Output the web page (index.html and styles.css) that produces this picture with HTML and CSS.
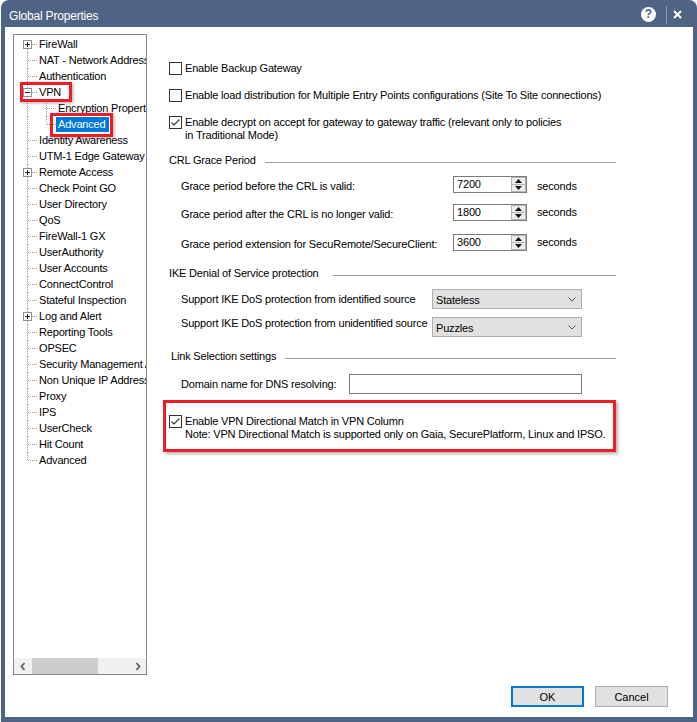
FILE: index.html
```html
<!DOCTYPE html>
<html>
<head>
<meta charset="utf-8">
<title>Global Properties</title>
<link rel="stylesheet" href="styles.css">
</head>
<body>
<div class="window">
  <div class="titlebar">
    <span class="title">Global Properties</span>
    <span class="help">?</span>
    <span class="sep"></span>
    <svg class="close" width="9" height="9" viewBox="0 0 9 9"><path d="M1 1 L8 8 M8 1 L1 8" stroke="#fff" stroke-width="2" fill="none"/></svg>
  </div>
  <div class="client">
    <div class="main">
      <div class="tree">
        <ul class="nodes">
          <li class="node first"><svg class="exp" width="9" height="9" viewBox="0 0 9 9"><rect x="0.5" y="0.5" width="8" height="8" fill="#fff" stroke="#919191"/><path d="M2 4.5 H7 M4.5 2 V7" stroke="#222"/></svg>FireWall</li>
          <li class="node">NAT - Network Address Translation</li>
          <li class="node">Authentication</li>
          <li class="node"><svg class="exp" width="9" height="9" viewBox="0 0 9 9"><rect x="0.5" y="0.5" width="8" height="8" fill="#fff" stroke="#919191"/><path d="M2 4.5 H7" stroke="#222"/></svg>VPN</li>
          <li class="node child"><span class="branch"></span>Encryption Properties</li>
          <li class="node child"><span class="branch lastchild"></span><span class="sel">Advanced</span></li>
          <li class="node">Identity Awareness</li>
          <li class="node">UTM-1 Edge Gateway</li>
          <li class="node"><svg class="exp" width="9" height="9" viewBox="0 0 9 9"><rect x="0.5" y="0.5" width="8" height="8" fill="#fff" stroke="#919191"/><path d="M2 4.5 H7 M4.5 2 V7" stroke="#222"/></svg>Remote Access</li>
          <li class="node">Check Point GO</li>
          <li class="node">User Directory</li>
          <li class="node">QoS</li>
          <li class="node">FireWall-1 GX</li>
          <li class="node">UserAuthority</li>
          <li class="node">User Accounts</li>
          <li class="node">ConnectControl</li>
          <li class="node">Stateful Inspection</li>
          <li class="node"><svg class="exp" width="9" height="9" viewBox="0 0 9 9"><rect x="0.5" y="0.5" width="8" height="8" fill="#fff" stroke="#919191"/><path d="M2 4.5 H7 M4.5 2 V7" stroke="#222"/></svg>Log and Alert</li>
          <li class="node">Reporting Tools</li>
          <li class="node">OPSEC</li>
          <li class="node">Security Management Access</li>
          <li class="node">Non Unique IP Address Ranges</li>
          <li class="node">Proxy</li>
          <li class="node">IPS</li>
          <li class="node">UserCheck</li>
          <li class="node">Hit Count</li>
          <li class="node last">Advanced</li>
        </ul>
        <div class="hscroll">
          <span class="sarrow"><svg width="6" height="9" viewBox="0 0 6 9"><path d="M4.5 1 L1.5 4.5 L4.5 8" stroke="#606060" stroke-width="1.8" fill="none"/></svg></span>
          <span class="thumb"></span>
          <span class="strack"></span>
          <span class="sarrow"><svg width="6" height="9" viewBox="0 0 6 9"><path d="M1.5 1 L4.5 4.5 L1.5 8" stroke="#606060" stroke-width="1.8" fill="none"/></svg></span>
        </div>
        <span class="mark mark-vpn"></span>
        <span class="mark mark-adv"></span>
      </div>

      <div class="pane">
        <div class="cb-row">
          <span class="cb"></span>
          <span class="cb-lbl">Enable Backup Gateway</span>
        </div>
        <div class="cb-row gap">
          <span class="cb"></span>
          <span class="cb-lbl">Enable load distribution for Multiple Entry Points configurations (Site To Site connections)</span>
        </div>
        <div class="cb-row gap">
          <span class="cb"><svg width="11" height="11" viewBox="0 0 11 11"><path d="M1.5 5.5 L4 8 L9.5 2.5" stroke="#333" stroke-width="1.1" fill="none"/></svg></span>
          <span class="cb-lbl">Enable decrypt on accept for gateway to gateway traffic (relevant only to policies<br>in Traditional Mode)</span>
        </div>

        <div class="sect sect-crl"><span class="sect-t w-crl">CRL Grace Period</span><span class="rule"></span></div>
        <div class="frow crl1">
          <span class="flabel w-crl-l">Grace period before the CRL is valid:</span>
          <span class="spin"><span class="spin-val">7200</span><span class="spin-btns"><span class="sb"><svg width="7" height="4" viewBox="0 0 7 4"><path d="M0 4 L3.5 0 L7 4 Z" fill="#111"/></svg></span><span class="sb"><svg width="7" height="4" viewBox="0 0 7 4"><path d="M0 0 L3.5 4 L7 0 Z" fill="#111"/></svg></span></span></span>
          <span class="unit">seconds</span>
        </div>
        <div class="frow crl2">
          <span class="flabel w-crl-l">Grace period after the CRL is no longer valid:</span>
          <span class="spin"><span class="spin-val">1800</span><span class="spin-btns"><span class="sb"><svg width="7" height="4" viewBox="0 0 7 4"><path d="M0 4 L3.5 0 L7 4 Z" fill="#111"/></svg></span><span class="sb"><svg width="7" height="4" viewBox="0 0 7 4"><path d="M0 0 L3.5 4 L7 0 Z" fill="#111"/></svg></span></span></span>
          <span class="unit up">seconds</span>
        </div>
        <div class="frow crl3">
          <span class="flabel w-crl-l">Grace period extension for SecuRemote/SecureClient:</span>
          <span class="spin"><span class="spin-val">3600</span><span class="spin-btns"><span class="sb"><svg width="7" height="4" viewBox="0 0 7 4"><path d="M0 4 L3.5 0 L7 4 Z" fill="#111"/></svg></span><span class="sb"><svg width="7" height="4" viewBox="0 0 7 4"><path d="M0 0 L3.5 4 L7 0 Z" fill="#111"/></svg></span></span></span>
          <span class="unit up">seconds</span>
        </div>

        <div class="sect sect-ike"><span class="sect-t w-ike">IKE Denial of Service protection</span><span class="rule"></span></div>
        <div class="frow ike1">
          <span class="flabel w-ike-l">Support IKE DoS protection from identified source</span>
          <span class="combo"><span>Stateless</span><svg width="8" height="5" viewBox="0 0 8 5"><path d="M0.5 0.5 L4 4 L7.5 0.5" stroke="#555" fill="none"/></svg></span>
        </div>
        <div class="frow ike2 toplabel">
          <span class="flabel w-ike-l">Support IKE DoS protection from unidentified source</span>
          <span class="combo"><span>Puzzles</span><svg width="8" height="5" viewBox="0 0 8 5"><path d="M0.5 0.5 L4 4 L7.5 0.5" stroke="#555" fill="none"/></svg></span>
        </div>

        <div class="sect sect-link"><span class="sect-t w-link">Link Selection settings</span><span class="rule"></span></div>
        <div class="frow dns">
          <span class="flabel w-dns-l">Domain name for DNS resolving:</span>
          <span class="textbox"></span>
        </div>

        <div class="note-box">
          <div class="cb-row">
            <span class="cb"><svg width="11" height="11" viewBox="0 0 11 11"><path d="M1.5 5.5 L4 8 L9.5 2.5" stroke="#333" stroke-width="1.1" fill="none"/></svg></span>
            <span class="cb-lbl">Enable VPN Directional Match in VPN Column<br>Note: VPN Directional Match is supported only on Gaia, SecurePlatform, Linux and IPSO.</span>
          </div>
        </div>
      </div>
    </div>
    <div class="footer">
      <span class="btn default">OK</span>
      <span class="btn">Cancel</span>
    </div>
  </div>
</div>
</body>
</html>
```
FILE: styles.css
```css
* { box-sizing: border-box; }
html, body { margin: 0; padding: 0; }
body {
  background: #fff;
  font-family: "Liberation Sans", Arial, sans-serif;
  font-size: 11px;
  letter-spacing: -0.18px;
  color: #000;
  width: 697px;
  height: 722px;
  overflow: hidden;
}
.window {
  margin-left: 1px;
  width: 696px;
  height: 722px;
  background: #4f6384;
  border-radius: 8px 8px 0 0;
  display: flex;
  flex-direction: column;
  padding-bottom: 5px;
}
.titlebar {
  height: 27px;
  flex-shrink: 0;
  display: flex;
  align-items: center;
  padding: 0 15px 0 8px;
  color: #fff;
}
.title {
  flex: 1;
  font-size: 12px;
  letter-spacing: -0.2px;
  padding-top: 5px;
}
.help {
  width: 15px;
  height: 15px;
  border-radius: 50%;
  background: #fff;
  color: #4f6384;
  font-weight: bold;
  font-size: 12px;
  letter-spacing: 0;
  line-height: 15px;
  text-align: center;
  margin-top: 2px;
}
.sep {
  width: 1px;
  height: 18px;
  background: #8999b3;
  margin: 2px 6px 0 10px;
}
.close { margin-top: 2px; }

.client {
  flex: 1;
  background: #fff;
  margin: 0 4px;
  display: flex;
  flex-direction: column;
}
.main {
  display: flex;
  padding-top: 7px;
  height: 648px;
}

/* tree */
.tree {
  position: relative;
  margin-left: 8px;
  width: 134px;
  height: 641px;
  border: 1px solid #828790;
  display: flex;
  flex-direction: column;
  flex-shrink: 0;
}
.nodes {
  list-style: none;
  margin: 0;
  padding: 1px 0 0 0;
  flex: 1;
  overflow: hidden;
}
.node {
  position: relative;
  height: 16px;
  line-height: 16px;
  padding-left: 25px;
  white-space: nowrap;
}
.node::before {
  content: "";
  position: absolute;
  left: 13px;
  top: 0;
  bottom: 0;
  border-left: 1px dotted #a0a0a0;
}
.node.first::before { top: 8px; }
.node.last::before { bottom: 8px; }
.node::after {
  content: "";
  position: absolute;
  left: 14px;
  top: 8px;
  width: 9px;
  border-top: 1px dotted #a0a0a0;
}
.node.child { padding-left: 44px; }
.node.child::after { display: none; }
.exp {
  position: absolute;
  left: 9px;
  top: 4px;
  z-index: 1;
}
.branch {
  position: absolute;
  left: 32px;
  top: 0;
  bottom: 0;
  border-left: 1px dotted #a0a0a0;
}
.branch.lastchild { bottom: 8px; }
.branch::after {
  content: "";
  position: absolute;
  left: 0;
  top: 8px;
  width: 9px;
  border-top: 1px dotted #a0a0a0;
}
.sel {
  display: inline-block;
  height: 15px;
  line-height: 15px;
  background: #0078d7;
  color: #fff;
  padding: 0 3px 0 2px;
  margin-left: -2px;
}
.hscroll {
  height: 16px;
  flex-shrink: 0;
  background: #f0f0f0;
  display: flex;
}
.sarrow {
  width: 17px;
  display: flex;
  align-items: center;
  justify-content: center;
}
.thumb {
  width: 66px;
  background: #cdcdcd;
  margin-left: 1px;
}
.strack { flex: 1; }

.mark {
  position: absolute;
  border: 3px solid #ee1c24;
  box-shadow: 1px 1px 3px rgba(0,0,0,0.35);
  z-index: 2;
}
.mark-vpn { left: 6px; top: 47px; width: 52px; height: 20px; }
.mark-adv { left: 36px; top: 78px; width: 63px; height: 24px; }

/* right pane */
.pane {
  flex: 1;
  padding: 28px 80px 0 22px;
}
.cb-row {
  display: flex;
  align-items: flex-start;
}
.cb-row.gap { margin-top: 14px; }
.cb {
  width: 13px;
  height: 13px;
  border: 1px solid #333;
  background: #fff;
  flex-shrink: 0;
  display: flex;
}
.cb-lbl {
  margin-left: 3px;
  line-height: 13px;
  white-space: nowrap;
}
.sect {
  display: flex;
  height: 13px;
  line-height: 13px;
}
.sect-t { flex-shrink: 0; white-space: nowrap; }
.rule {
  flex: 1;
  height: 0;
  border-top: 1px solid #a0a0a0;
  margin-top: 8px;
}
.sect-crl { margin-top: 12px; }
.sect-ike { margin-top: 14px; }
.sect-link { margin-top: 13px; padding-left: 2px; }
.w-crl { width: 96px; }
.w-ike { width: 164px; }
.w-link { width: 114px; }

.frow {
  display: flex;
  align-items: center;
  padding-left: 12px;
}
.flabel { flex-shrink: 0; white-space: nowrap; }
.crl1, .crl2, .crl3 { height: 19px; }
.crl1 { margin-top: 9px; }
.crl2 { margin-top: 9px; }
.crl3 { margin-top: 11px; }
.w-crl-l { width: 272px; line-height: 19px; padding-top: 1px; }
.spin {
  width: 74px;
  height: 17px;
  align-self: flex-start;
  border: 1px solid #7a7a7a;
  background: #fff;
  display: flex;
}
.spin-val {
  flex: 1;
  padding-left: 3px;
  line-height: 15px;
}
.spin-btns {
  width: 15px;
  display: flex;
  flex-direction: column;
}
.sb {
  flex: 1;
  background: #ececec;
  border: 1px solid #b4b4b4;
  display: flex;
  align-items: center;
  justify-content: center;
}
.sb + .sb { border-top: none; }
.unit { margin-left: 10px; line-height: 19px; padding-top: 1px; }
.unit.up { padding-top: 0; margin-top: -2px; }

.ike1, .ike2 { height: 20px; }
.ike1 { margin-top: 9px; }
.ike2 { margin-top: 8px; }
.w-ike-l { width: 251px; }
.toplabel .flabel { align-self: flex-start; line-height: 13px; }
.combo {
  width: 150px;
  height: 20px;
  border: 1px solid #adadad;
  background: #e1e1e1;
  display: flex;
  align-items: center;
  justify-content: space-between;
  padding: 1px 5px 0 3px;
}

.dns { height: 20px; margin-top: 11px; }
.w-dns-l { width: 168px; }
.textbox {
  width: 233px;
  height: 20px;
  border: 1px solid #7a7a7a;
  background: #fff;
}

.note-box {
  margin-top: 6px;
  margin-left: -6px;
  width: 453px;
  border: 3px solid #ee1c24;
  box-shadow: 2px 2px 3px rgba(0,0,0,0.3);
  padding: 12px 0 8px 3px;
}

.footer {
  display: flex;
  justify-content: flex-end;
  gap: 11px;
  padding: 11px 25px 0 0;
}
.btn {
  width: 73px;
  height: 21px;
  background: #e1e1e1;
  border: 1px solid #adadad;
  display: flex;
  align-items: center;
  justify-content: center;
  letter-spacing: 0;
}
.btn.default { border: 2px solid #0078d7; }
```
